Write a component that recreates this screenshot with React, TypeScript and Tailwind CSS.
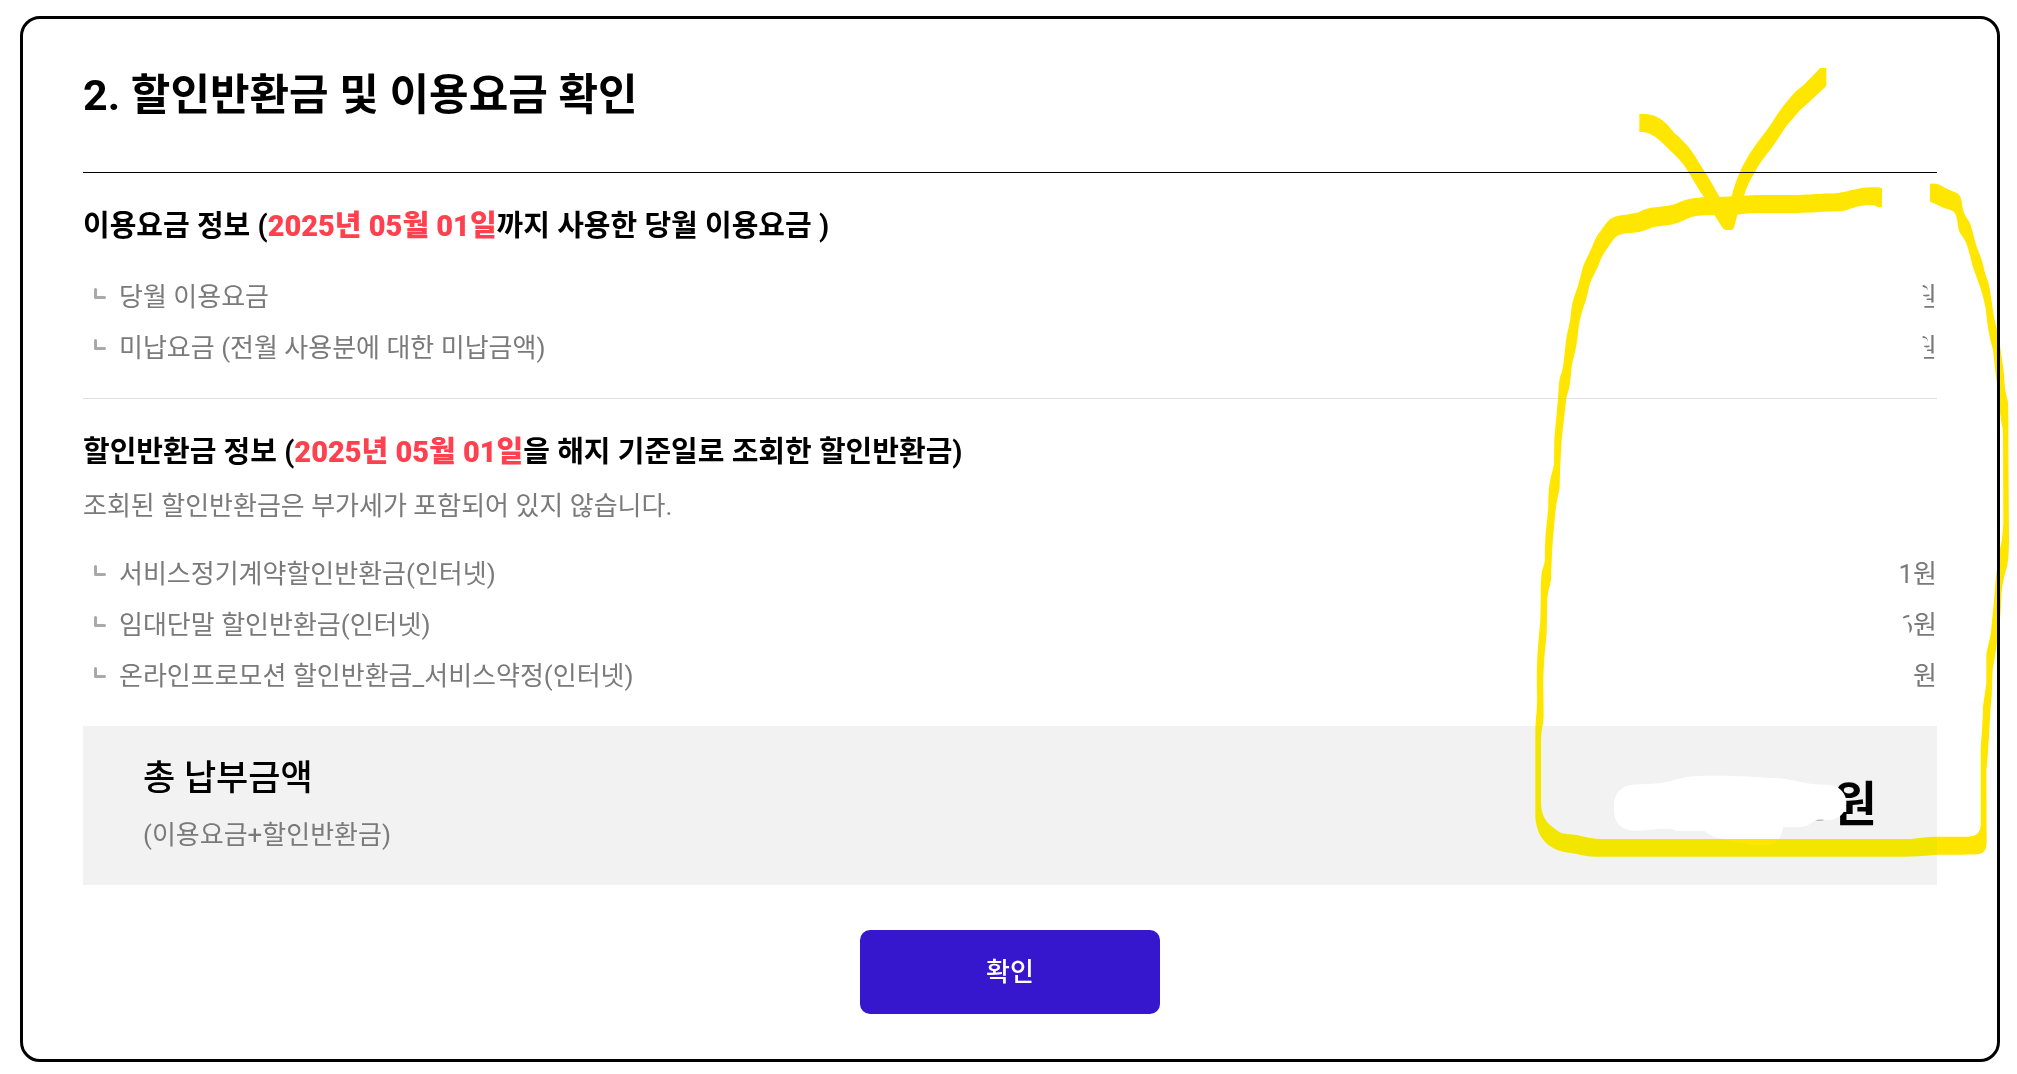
import React from "react";

type Row = { label: string; amount: string };

const usageRows: Row[] = [
  { label: "당월 이용요금", amount: "원" },
  { label: "미납요금 (전월 사용분에 대한 미납금액)", amount: "원" },
];

const refundRows: Row[] = [
  { label: "서비스정기계약할인반환금(인터넷)", amount: "1원" },
  { label: "임대단말 할인반환금(인터넷)", amount: "6원" },
  { label: "온라인프로모션 할인반환금_서비스약정(인터넷)", amount: "원" },
];

function FeeList({ rows }: { rows: Row[] }) {
  return (
    <ul className="text-[26px] leading-[39px] text-[#7a7a7a]">
      {rows.map((row) => (
        <li key={row.label} className="mb-3 flex items-center justify-between last:mb-0">
          <span className="flex items-center">
            <svg className="mr-[13px] mb-2 ml-[11px] h-[11px] w-3" viewBox="0 0 12 11" aria-hidden="true">
              <path d="M1.5 1.5 V9.5 H10.5" fill="none" stroke="#a9a9a9" strokeWidth="3" strokeLinecap="round" strokeLinejoin="round" />
            </svg>
            {row.label}
          </span>
          <span>{row.amount}</span>
        </li>
      ))}
    </ul>
  );
}

/* Highlighter strokes (blended over the page) and the white eraser marks. */
function Annotations() {
  return (
    <>
      <svg
        className="pointer-events-none absolute top-0 right-0 h-[1074px] w-[500px]"
        viewBox="0 0 1500 3222"
        aria-hidden="true"
      >
        <g fill="#ffffff">
          <path d="M1195 848 H1217 V866 C1226 860 1232 866 1232 872 C1232 880 1226 880 1218 882 L1219 888 L1230 892 L1226 903 L1222 904 V940 H1180 V848 Z" />
          <path d="M1195 1000 H1217 V1016 C1226 1012 1232 1018 1232 1026 C1232 1032 1226 1034 1221 1036 L1222 1041 L1232 1045 L1228 1058 L1221 1060 V1094 H1180 V1000 Z" />
          <path d="M1140 1830 H1158 V1855 L1188 1855 L1186 1862 H1170 L1176 1877 L1178 1901 L1176 1930 H1135 Z" />
          <path d="M291 2420 C288 2385 312 2357 345 2354 C385 2352 420 2352 450 2346 C485 2337 500 2330 540 2328 C640 2325 700 2330 790 2335 C830 2340 860 2350 890 2353 L940 2355 C972 2360 990 2385 988 2412 C986 2440 965 2456 942 2459 C925 2462 910 2458 895 2462 C880 2470 870 2480 850 2481 H798 C796 2505 785 2525 765 2532 C735 2540 700 2535 680 2530 C650 2526 620 2516 605 2514 C585 2510 572 2500 562 2493 H480 C470 2490 465 2486 455 2486 C415 2486 380 2492 345 2492 C312 2490 290 2465 291 2430 Z" />
        </g>
        <path fill="#b4b4b4" d="M894 2461 C902 2458 914 2458 922 2460 C914 2464 902 2464 894 2461 Z" />
      </svg>
      <svg
        className="pointer-events-none absolute top-0 right-0 h-[1074px] w-[500px] mix-blend-darken"
        viewBox="0 0 1500 3222"
        aria-hidden="true"
      >
        <g fill="#ffe600">
          <path
            transform="translate(0 120)"
            d="M367 222 C390 221 408 222 430 236 C450 250 458 262 472 279 C515 315 530 340 550 375 C572 405 590 442 608 471 L644 469 C655 425 672 385 690 355 C715 312 740 285 764 250 C785 215 800 195 835 155 L860 135 L910 84 H928 V138 C905 160 885 178 870 192 C845 212 835 228 815 250 C795 275 785 295 768 318 C745 350 730 365 714 396 C698 420 688 445 681 467 C740 464 790 466 830 465 C870 464 890 462 915 461 C940 461 955 461 975 457 C1010 450 1030 443 1060 442 C1080 441 1095 441 1095 447 V501 H1080 C1072 492 1050 495 1025 499 C1000 505 995 510 975 514 L920 515 C870 519 800 519 740 519 C710 519 690 520 661 524 L651 563 Q649 570 642 570 H627 Q620 570 615 561 L592 525 C565 526 540 525 515 534 C490 545 485 550 460 554 C440 557 425 558 410 561 C390 568 385 572 365 576 C340 580 320 578 302 587 C290 594 285 605 272 623 C245 660 250 670 238 690 C210 745 222 725 207 780 C188 835 188 840 182 890 C176 940 168 950 163 990 C158 1050 155 1050 148 1074 L134 1200 H112 C117 1140 122 1100 126 1030 L129 1012 C140 985 140 960 145 920 C150 870 158 860 162 820 C165 780 175 765 185 730 C195 695 195 680 210 653 C225 625 228 610 240 588 L265 553 C275 538 285 531 305 527 C340 523 350 520 365 517 C385 506 395 504 415 502 C440 498 470 498 488 486 C505 478 520 475 545 473 L561 471 C545 450 535 430 520 406 C500 370 485 355 460 332 C425 295 400 273 367 276 Z"
          />
          <path
            transform="translate(0 120)"
            d="M1239 431 C1255 429 1260 431 1270 436 C1285 444 1295 450 1310 455 C1330 460 1333 475 1335 490 C1340 530 1350 530 1359 550 C1370 580 1372 605 1385 635 C1400 670 1400 690 1410 715 C1425 760 1425 820 1438 860 C1448 900 1452 940 1459 985 C1464 1030 1462 1050 1472 1080 C1475 1100 1474 1150 1474 1200 L1476 1490 C1476 1520 1476 1550 1470 1580 C1458 1620 1455 1640 1453 1670 C1450 1750 1444 1790 1437 1830 L1427 1890 L1424 1970 C1420 2010 1418 2050 1416 2090 C1412 2140 1412 2160 1408 2190 L1409 2410 Q1408 2440 1385 2443 C1340 2445 1290 2444 1250 2445 C1220 2449 1190 2450 1160 2450 H235 C200 2449 190 2443 160 2439 C135 2435 120 2432 105 2422 C75 2404 58 2375 55 2330 V2070 C56 2030 62 2010 60 1950 C58 1850 65 1800 70 1740 C72 1690 70 1640 73 1610 C74 1585 83 1580 84 1555 C84 1480 88 1470 94 1400 C94 1310 108 1300 111 1270 L112 1200 H134 C130 1270 130 1280 128 1345 C120 1380 116 1400 112 1450 C105 1530 105 1550 103 1600 C104 1635 93 1640 91 1680 L89 1780 C84 1830 79 1880 79 1930 L80 2020 C80 2060 73 2060 72 2110 V2280 C72 2330 85 2350 133 2379 C155 2384 175 2382 195 2389 C225 2396 235 2397 260 2397 H1170 C1200 2396 1215 2391 1250 2390 H1355 Q1390 2388 1391 2355 V2130 C1394 2080 1397 2050 1398 2000 L1408 1930 V1845 C1411 1820 1420 1800 1423 1765 C1427 1720 1431 1690 1434 1640 C1440 1580 1445 1540 1455 1500 L1459 1450 L1458 1200 L1457 1165 C1448 1120 1448 1110 1444 1050 C1435 1010 1434 980 1428 930 C1415 885 1412 860 1406 805 C1395 750 1385 730 1368 682 C1355 630 1350 610 1340 595 C1330 578 1325 580 1322 550 C1319 525 1315 515 1300 510 C1275 502 1265 495 1239 485 Z"
          />
        </g>
      </svg>
    </>
  );
}

export default function App() {
  return (
    <div className="relative overflow-hidden bg-white pt-4 pr-[17px] pb-3 pl-5 font-[Roboto,'Noto_Sans_CJK_KR',sans-serif] text-black">
      <main className="rounded-[20px] border-3 border-black px-[60px] pb-[45px]">
        <h1 className="border-b border-black pt-[43px] pb-11 text-[43px] leading-[66px] font-bold">
          2. 할인반환금 및 이용요금 확인
        </h1>

        <section className="border-b border-[#e1e1e1] pt-[31px] pb-[30px]">
          <h2 className="mb-[29px] text-[29px] leading-[45px] font-bold">
            이용요금 정보 (<strong className="font-black text-[#ff404f]">2025년 05월 01일</strong>까지 사용한 당월
            이용요금 )
          </h2>
          <FeeList rows={usageRows} />
        </section>

        <section className="pt-[31px] pb-[30px]">
          <h2 className="text-[29px] leading-[45px] font-bold">
            할인반환금 정보 (<strong className="font-black text-[#ff404f]">2025년 05월 01일</strong>을 해지 기준일로
            조회한 할인반환금)
          </h2>
          <p className="mt-3 mb-[29px] text-[26px] leading-[39px] text-[#7a7a7a]">
            조회된 할인반환금은 부가세가 포함되어 있지 않습니다.
          </p>
          <FeeList rows={refundRows} />
        </section>

        <section className="flex items-center justify-between bg-[#f2f2f2] px-[60px] pt-[29px] pb-[30px]">
          <div>
            <h2 className="text-[35px] leading-[48px] font-medium">총 납부금액</h2>
            <p className="mt-[13px] text-[26px] leading-[39px] text-[#7a7a7a]">(이용요금+할인반환금)</p>
          </div>
          <strong className="text-[48px] leading-[66px] font-bold">원</strong>
        </section>

        <div className="mt-[45px] flex justify-center">
          <button
            type="button"
            className="h-[84px] w-[300px] rounded-[10px] bg-[#3617ce] text-[26px] font-medium text-white"
          >
            확인
          </button>
        </div>
      </main>
      <Annotations />
    </div>
  );
}
